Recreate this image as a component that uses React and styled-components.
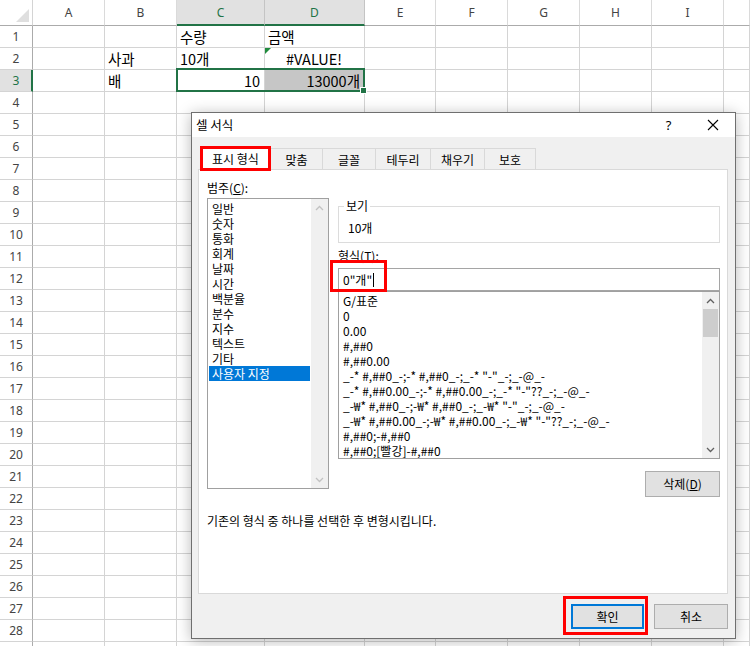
import React from 'react'
import styled, { createGlobalStyle } from 'styled-components'

const GlobalStyle = createGlobalStyle`
  html, body { margin: 0; padding: 0; background: #fff; }
  body { width: 750px; height: 646px; overflow: hidden; font-family: "Noto Sans CJK KR", "Noto Sans", sans-serif; }
`

const COLS = ['A', 'B', 'C', 'D', 'E', 'F', 'G', 'H', 'I', 'J']
const ROWS = Array.from({ length: 29 }, (_, i) => i + 1)
const SEL_COLS = ['C', 'D']
const SEL_ROW = 3

const cells = {
  'C1': { text: '수량' },
  'D1': { text: '금액' },
  'B2': { text: '사과' },
  'C2': { text: '10개' },
  'D2': { text: '#VALUE!', align: 'center', flag: true },
  'B3': { text: '배' },
  'C3': { text: '10', align: 'right' },
  'D3': { text: '13000개', align: 'right', shade: true },
}

const categories = ['일반', '숫자', '통화', '회계', '날짜', '시간', '백분율', '분수', '지수', '텍스트', '기타', '사용자 지정']

const formats = [
  'G/표준',
  '0',
  '0.00',
  '#,##0',
  '#,##0.00',
  '_-* #,##0_-;-* #,##0_-;_-* "-"_-;_-@_-',
  '_-* #,##0.00_-;-* #,##0.00_-;_-* "-"??_-;_-@_-',
  '_-₩* #,##0_-;-₩* #,##0_-;_-₩* "-"_-;_-@_-',
  '_-₩* #,##0.00_-;-₩* #,##0.00_-;_-₩* "-"??_-;_-@_-',
  '#,##0;-#,##0',
  '#,##0;[빨강]-#,##0',
]

const tabs = [
  { label: '표시 형식', w: 71, active: true },
  { label: '맞춤', w: 53 },
  { label: '글꼴', w: 54 },
  { label: '테두리', w: 56 },
  { label: '채우기', w: 55 },
  { label: '보호', w: 52 },
]

const Page = styled.div`
  position: relative;
  width: 750px;
  height: 646px;
  overflow: hidden;
`

const Sheet = styled.div`
  display: grid;
  grid-template-columns: 33px 72px 72px 88px 100px 71px 72px 72px 72px 72px 1fr;
  grid-template-rows: 26px repeat(29, 22px);
`

const Corner = styled.div`
  grid-row: 1;
  grid-column: 1;
  box-sizing: border-box;
  position: relative;
  border-right: 1px solid #d4d4d4;
  border-bottom: 1px solid #ababab;
  &::after {
    content: '';
    position: absolute;
    right: 3px;
    bottom: 3px;
    width: 0;
    height: 0;
    border-left: 13px solid transparent;
    border-bottom: 13px solid #dfdfdf;
  }
`

const ColHead = styled.div`
  grid-row: 1;
  grid-column: ${p => p.$c};
  box-sizing: border-box;
  display: flex;
  align-items: center;
  justify-content: center;
  background: ${p => (p.$on ? '#e1e1e1' : '#fff')};
  color: ${p => (p.$on ? '#217346' : '#444')};
  border-right: 1px solid ${p => (p.$on ? '#c4c4c4' : '#dadada')};
  border-bottom: ${p => (p.$on ? '2px solid #217346' : '1px solid #ababab')};
  font: 12px "Noto Sans", sans-serif;
  padding-top: ${p => (p.$on ? '1px' : '0')};
`

const RowHead = styled.div`
  grid-row: ${p => p.$r};
  grid-column: 1;
  box-sizing: border-box;
  display: flex;
  align-items: center;
  justify-content: center;
  background: ${p => (p.$on ? '#e1e1e1' : '#fff')};
  color: ${p => (p.$on ? '#217346' : '#444')};
  border-right: ${p => (p.$on ? '2px solid #217346' : '1px solid #ababab')};
  border-bottom: 1px solid #d4d4d4;
  font: 12px "Noto Sans", sans-serif;
  padding-left: ${p => (p.$on ? '1px' : '0')};
`

const Cell = styled.div`
  grid-row: ${p => p.$r};
  grid-column: ${p => p.$c};
  box-sizing: border-box;
  position: relative;
  border-right: 1px solid #d4d4d4;
  border-bottom: 1px solid #d4d4d4;
  background: ${p => (p.$shade ? '#c6c6c6' : '#fff')};
  color: #000;
  font: 14.5px/21px "Noto Sans CJK KR", sans-serif;
  padding: 0 4px 0 3px;
  text-align: ${p => p.$align || 'left'};
  white-space: nowrap;
`

const ErrorFlag = styled.span`
  position: absolute;
  left: 0;
  top: 0;
  width: 0;
  height: 0;
  border-top: 6px solid #1f8b3c;
  border-right: 6px solid transparent;
`

const Selection = styled.div`
  grid-row: ${SEL_ROW + 1};
  grid-column: 4 / 6;
  margin: -2px 0 0 -1px;
  border: 2px solid #217346;
  position: relative;
  z-index: 2;
  pointer-events: none;
`

const FillHandle = styled.span`
  position: absolute;
  right: -4px;
  bottom: -4px;
  width: 7px;
  height: 7px;
  box-sizing: border-box;
  background: #217346;
  border: 1px solid #fff;
`

const Dialog = styled.div`
  position: absolute;
  left: 191px;
  top: 112px;
  width: 545px;
  height: 527px;
  box-sizing: border-box;
  border: 1px solid #6f6f6f;
  background: #f0f0f0;
  box-shadow: 0 2px 14px rgba(0, 0, 0, 0.28);
  font: 12px/16px "Noto Sans CJK KR", "Noto Sans", sans-serif;
  color: #000;
  display: flex;
  flex-direction: column;
  z-index: 5;
`

const TitleBar = styled.div`
  height: 24px;
  background: #fff;
  display: flex;
  align-items: center;
  padding-left: 4px;
`

const TitleText = styled.span`
  flex: 1;
  font-size: 12.5px;
`

const TitleButton = styled.div`
  width: ${p => p.$w}px;
  height: 24px;
  display: flex;
  align-items: center;
  justify-content: center;
  font: 13px "Noto Sans", sans-serif;
`

const Body = styled.div`
  flex: 1;
  display: flex;
  flex-direction: column;
  padding: 11px 7px 0 6px;
`

const TabRow = styled.div`
  display: flex;
  align-items: flex-end;
  height: 21px;
  padding-left: 2px;
`

const Tab = styled.div`
  position: relative;
  width: ${p => p.$w}px;
  height: ${p => (p.$active ? '23px' : '21px')};
  margin-bottom: ${p => (p.$active ? '-1px' : '0')};
  margin-left: ${p => (p.$first ? '0' : '-1px')};
  box-sizing: border-box;
  border: 1px solid #d9d9d9;
  border-bottom: none;
  background: ${p => (p.$active ? '#fff' : '#f0f0f0')};
  z-index: ${p => (p.$active ? 1 : 0)};
  display: flex;
  align-items: center;
  justify-content: center;
  padding-top: ${p => (p.$active ? '0' : '1px')};
  white-space: nowrap;
`

const Mark = styled.span`
  position: absolute;
  inset: ${p => p.$inset};
  border: 3px solid #ff0000;
  pointer-events: none;
  z-index: 3;
`

const InputMark = styled(Mark)`
  width: 57px;
  height: 32px;
  box-sizing: border-box;
`

const Panel = styled.div`
  height: 425px;
  box-sizing: border-box;
  border: 1px solid #d9d9d9;
  background: #fff;
  padding: 9px 7px 0 8px;
`

const Columns = styled.div`
  display: grid;
  grid-template-columns: 122px 1fr;
  column-gap: 9px;
`

const Label = styled.div`
  line-height: 18px;
  margin-top: ${p => p.$mt || 0}px;
  margin-bottom: ${p => p.$mb || 0}px;
`

const ListBox = styled.div`
  height: ${p => p.$h}px;
  margin-top: ${p => p.$mt || 0}px;
  box-sizing: border-box;
  border: 1px solid #a0a0a0;
  display: flex;
  background: #fff;
`

const Items = styled.div`
  flex: 1;
  padding: ${p => p.$pad};
  overflow: hidden;
`

const Item = styled.div`
  height: 15px;
  line-height: 15px;
  padding-left: ${p => p.$indent}px;
  white-space: nowrap;
  background: ${p => (p.$selected ? '#0078d7' : 'transparent')};
  color: ${p => (p.$selected ? '#fff' : '#000')};
`

const ScrollBar = styled.div`
  width: 17px;
  background: #f0f0f0;
  display: flex;
  flex-direction: column;
`

const Arrow = styled.div`
  height: 17px;
  display: flex;
  align-items: center;
  justify-content: center;
`

const Track = styled.div`
  flex: 1;
  padding: 0 1px;
`

const Thumb = styled.div`
  height: 28px;
  background: #cdcdcd;
`

const GroupBox = styled.div`
  position: relative;
  height: 37px;
  margin-top: 27px;
  box-sizing: border-box;
  border: 1px solid #dcdcdc;
  padding: 12px 0 0 9px;
  line-height: 18px;
`

const Legend = styled.span`
  position: absolute;
  left: 5px;
  top: -9px;
  padding: 0 2px;
  background: #fff;
  line-height: 16px;
`

const InputWrap = styled.div`
  position: relative;
`

const TextInput = styled.div`
  height: 23px;
  box-sizing: border-box;
  border: 1px solid #a5a5a5;
  padding: 0 4px;
  display: flex;
  align-items: center;
  line-height: 16px;
`

const Caret = styled.span`
  display: inline-block;
  width: 1px;
  height: 14px;
  background: #000;
  margin-left: 1px;
`

const RightAlign = styled.div`
  display: flex;
  justify-content: flex-end;
  margin-top: ${p => p.$mt || 0}px;
  gap: ${p => p.$gap || 0}px;
`

const Button = styled.div`
  position: relative;
  width: ${p => p.$w}px;
  height: ${p => p.$h}px;
  box-sizing: border-box;
  border: ${p => (p.$default ? '2px solid #0078d7' : '1px solid #adadad')};
  background: #e1e1e1;
  display: flex;
  align-items: center;
  justify-content: center;
`

const Description = styled.div`
  margin-top: 15px;
  line-height: 18px;
`

function Chevron({ down, color }) {
  return (
    <svg width="9" height="6" viewBox="0 0 9 6">
      <polyline
        points={down ? '1,1 4.5,4.5 8,1' : '1,5 4.5,1.5 8,5'}
        fill="none"
        stroke={color}
        strokeWidth="1.3"
      />
    </svg>
  )
}

function Grid() {
  return (
    <Sheet>
      <Corner />
      {COLS.map((c, i) => (
        <ColHead key={c} $c={i + 2} $on={SEL_COLS.includes(c)}>
          {c === 'J' ? '' : c}
        </ColHead>
      ))}
      {ROWS.map(r => (
        <React.Fragment key={r}>
          {/* row 29 only peeks in at the bottom edge, its number is out of view */}
          <RowHead $r={r + 1} $on={r === SEL_ROW}>{r < 29 ? r : ''}</RowHead>
          {COLS.map((c, i) => {
            const d = cells[c + r]
            return (
              <Cell key={c} $r={r + 1} $c={i + 2} $align={d?.align} $shade={d?.shade}>
                {d?.flag && <ErrorFlag />}
                {d?.text}
              </Cell>
            )
          })}
        </React.Fragment>
      ))}
      <Selection>
        <FillHandle />
      </Selection>
    </Sheet>
  )
}

function FormatDialog() {
  return (
    <Dialog>
      <TitleBar>
        <TitleText>셀 서식</TitleText>
        <TitleButton $w={45}>?</TitleButton>
        <TitleButton $w={44}>
          <svg width="12" height="12" viewBox="0 0 12 12">
            <path d="M1 1L11 11M11 1L1 11" stroke="#000" strokeWidth="1.1" />
          </svg>
        </TitleButton>
      </TitleBar>
      <Body>
        <TabRow>
          {tabs.map((t, i) => (
            <Tab key={t.label} $w={t.w} $active={t.active} $first={i === 0}>
              {t.label}
              {t.active && <Mark $inset="-2px -1px -1px -1px" />}
            </Tab>
          ))}
        </TabRow>
        <Panel>
          <Columns>
            <div>
              <Label>범주(<u>C</u>):</Label>
              <ListBox $h={291} $mt={1}>
                <Items $pad="2px 1px 0 1px">
                  {categories.map(c => (
                    <Item key={c} $indent={3} $selected={c === '사용자 지정'}>{c}</Item>
                  ))}
                </Items>
                <ScrollBar>
                  <Arrow><Chevron color="#c2c2c2" /></Arrow>
                  <Track />
                  <Arrow><Chevron down color="#c2c2c2" /></Arrow>
                </ScrollBar>
              </ListBox>
            </div>
            <div>
              <GroupBox>
                <Legend>보기</Legend>
                10개
              </GroupBox>
              <Label $mt={4} $mb={3}>형식(<u>T</u>):</Label>
              <InputWrap>
                <TextInput>0"개"<Caret /></TextInput>
                <InputMark $inset="-8px auto auto -8px" />
              </InputWrap>
              <ListBox $h={168}>
                <Items $pad="1px 0 0 4px">
                  {formats.map(f => (
                    <Item key={f} $indent={0}>{f}</Item>
                  ))}
                </Items>
                <ScrollBar>
                  <Arrow><Chevron color="#606060" /></Arrow>
                  <Track><Thumb /></Track>
                  <Arrow><Chevron down color="#606060" /></Arrow>
                </ScrollBar>
              </ListBox>
              <RightAlign $mt={12}>
                <Button $w={75} $h={26}>삭제(<u>D</u>)</Button>
              </RightAlign>
            </div>
          </Columns>
          <Description>기존의 형식 중 하나를 선택한 후 변형시킵니다.</Description>
        </Panel>
        <RightAlign $mt={10} $gap={10}>
          <Button $w={73} $h={25} $default>
            확인
            <Mark $inset="-10px -6px -8px -10px" />
          </Button>
          <Button $w={74} $h={25}>취소</Button>
        </RightAlign>
      </Body>
    </Dialog>
  )
}

export default function App() {
  return (
    <Page>
      <GlobalStyle />
      <Grid />
      <FormatDialog />
    </Page>
  )
}
